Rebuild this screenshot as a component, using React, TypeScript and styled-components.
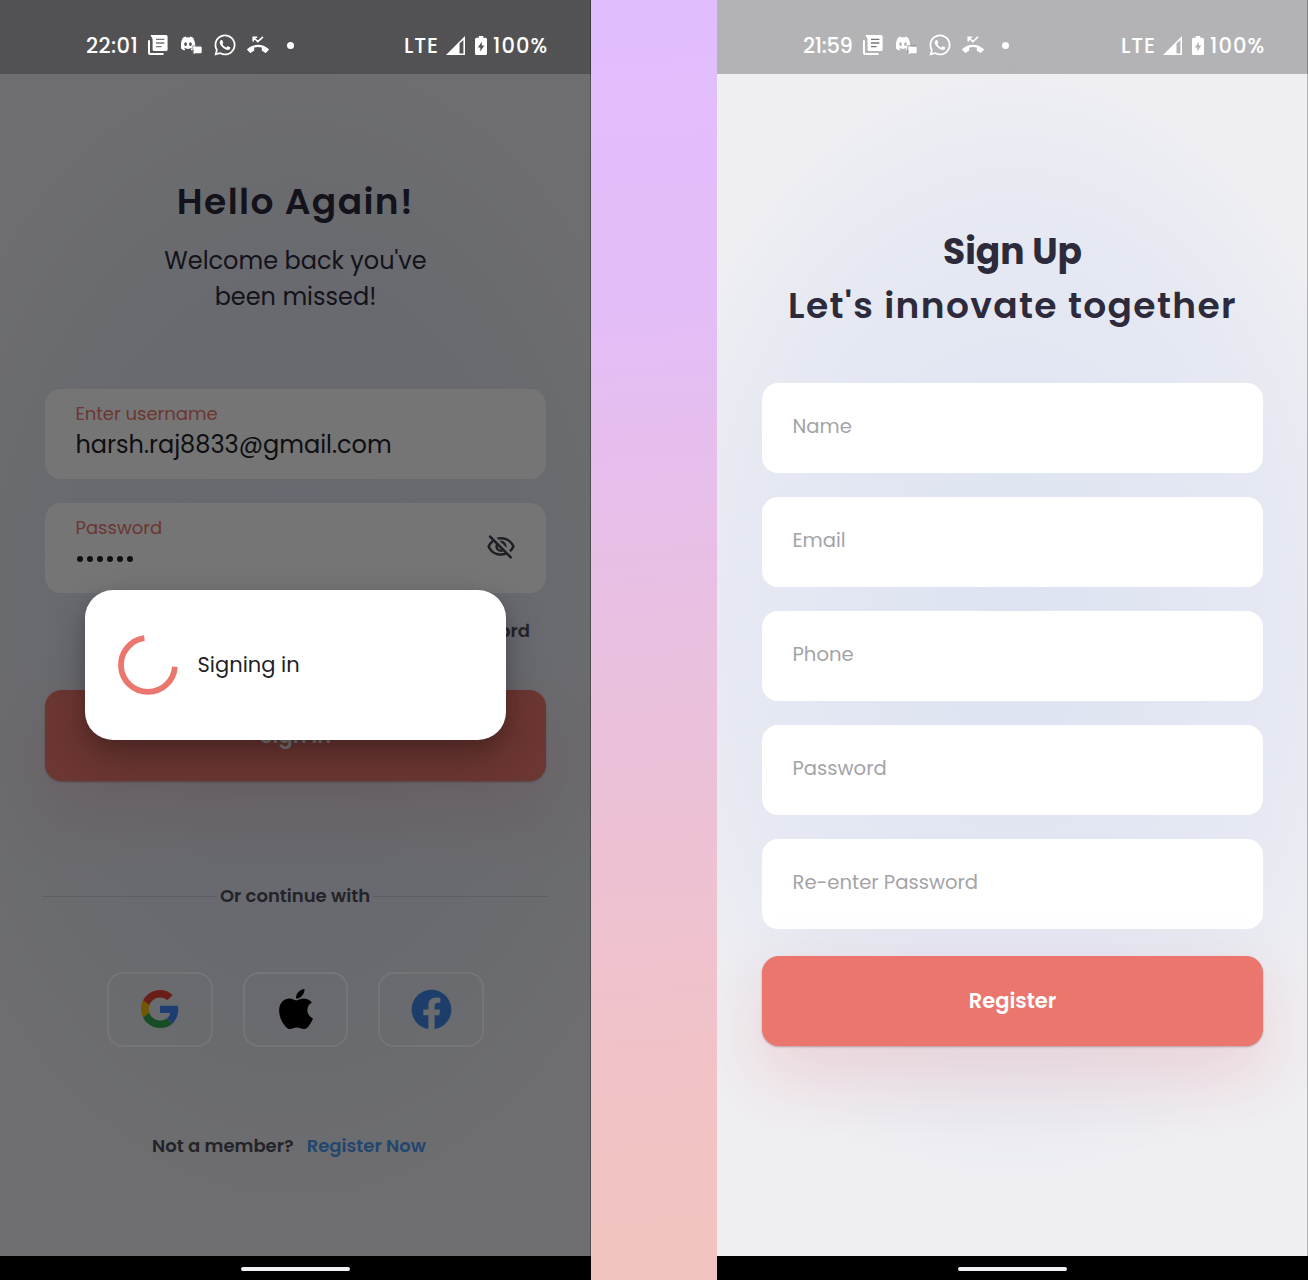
import React from "react";
import styled, { createGlobalStyle } from "styled-components";
import { FaApple, FaDiscord, FaFacebook, FaWhatsapp } from "react-icons/fa";
import { MdOutlineVisibilityOff } from "react-icons/md";

const ink = "#2d2b3b";
const softInk = "#504e5a";
const coral = "#eb766d";

const GlobalStyle = createGlobalStyle`
  *, *::before, *::after { box-sizing: border-box; }
  body {
    margin: 0;
    font-family: Poppins, Inter, "Open Sans", sans-serif;
    color: ${ink};
  }
`;

const Board = styled.main`
  display: flex;
  justify-content: space-between;
  width: 1308px;
  height: 1280px;
  overflow: hidden;
  background: linear-gradient(176deg, #e2bdff 0%, #e3bdf8 25%, #e9c0de 52%, #f2c3c4 85%, #f4c4c0 100%);
`;

const Phone = styled.section`
  position: relative;
  display: flex;
  flex-direction: column;
  width: 591px;
  height: 1280px;
  overflow: hidden;
  background:
    linear-gradient(to left, rgba(0, 0, 0, 0.25) 1px, transparent 1px),
    radial-gradient(ellipse 390px 570px at 50% 49%, #dce3f2 0%, #e2e6f2 40%, #e6e9f2 72%, rgba(236, 238, 243, 0) 100%),
    #efeff3;
`;

const StatusBar = styled.header`
  position: relative;
  z-index: 2;
  display: flex;
  align-items: center;
  justify-content: space-between;
  flex: none;
  height: 74px;
  padding: 16px 43px 0 86px;
  background: rgba(0, 0, 0, 0.25);
  color: #fff;
`;

const StatusGroup = styled.div`
  display: flex;
  align-items: center;
`;

const StatusText = styled.span<{ $width: number; $spacing: number }>`
  width: ${(p) => p.$width}px;
  padding-top: 1px;
  font-size: 21px;
  font-weight: 500;
  line-height: 26px;
  letter-spacing: ${(p) => p.$spacing}px;
  white-space: nowrap;
`;

const Glyph = styled.span<{ $left: number; $width: number }>`
  display: flex;
  justify-content: center;
  width: ${(p) => p.$width}px;
  margin-left: ${(p) => p.$left}px;
`;

const NotificationDot = styled.i`
  width: 7px;
  height: 7px;
  margin-left: 18px;
  border-radius: 50%;
  background: #fff;
`;

const NavBar = styled.footer`
  position: relative;
  z-index: 2;
  display: flex;
  align-items: center;
  justify-content: center;
  flex: none;
  height: 24px;
  padding-top: 2px;
  background: #000;
`;

const HomePill = styled.i`
  width: 109px;
  height: 4px;
  border-radius: 2px;
  background: #f1f0f5;
`;

const Screen = styled.div<{ $top: number }>`
  display: flex;
  flex: 1;
  flex-direction: column;
  padding: ${(p) => p.$top}px 45px 0;
`;

const Title = styled.h1<{ $weight?: number; $spacing?: number }>`
  margin: 0;
  font-size: 36px;
  font-weight: ${(p) => p.$weight ?? 600};
  line-height: 54px;
  letter-spacing: ${(p) => p.$spacing ?? 0}px;
  text-align: center;
  white-space: nowrap;
`;

const Subtitle = styled.p`
  margin: 14px 0 0;
  font-size: 24px;
  line-height: 36px;
  text-align: center;
`;

const Form = styled.form<{ $top: number }>`
  display: flex;
  flex-direction: column;
  gap: 24.5px;
  margin-top: ${(p) => p.$top}px;
`;

const Field = styled.label`
  display: flex;
  align-items: center;
  justify-content: space-between;
  height: 89.5px;
  padding: 0 30px 0 30.5px;
  border-radius: 16px;
  background: #fff;
`;

const FieldText = styled.span`
  display: flex;
  flex-direction: column;
  padding-bottom: 6px;
`;

const FieldLabel = styled.span`
  font-size: 18px;
  line-height: 28px;
  color: ${coral};
`;

const FieldValue = styled.span`
  height: 34px;
  font-size: 24px;
  line-height: 34px;
  color: #222129;
`;

const MaskedValue = styled.span`
  display: flex;
  align-items: center;
  gap: 4px;
  height: 34px;
  padding-left: 1.5px;
`;

const MaskDot = styled.i`
  width: 6px;
  height: 6px;
  border-radius: 50%;
  background: #222129;
`;

const HidePasswordIcon = styled(MdOutlineVisibilityOff)`
  margin-bottom: 2px;
  color: #444251;
`;

const Placeholder = styled.span`
  margin-top: -3px;
  font-size: 19.6px;
  line-height: 30px;
  color: #a3a3a7;
`;

const Recovery = styled.a`
  align-self: flex-end;
  margin: 24px 16px 0 0;
  font-size: 18px;
  font-weight: 600;
  line-height: 28px;
  color: ${softInk};
`;

const PrimaryButton = styled.button<{ $top: number }>`
  flex: none;
  height: 90.5px;
  margin-top: ${(p) => p.$top}px;
  padding: 0;
  border: 0;
  border-radius: 17px;
  background: ${coral};
  box-shadow: 0 1px 2px rgba(90, 30, 40, 0.35), 0 30px 66px 8px rgba(235, 118, 119, 0.19);
  color: #fff;
  font-family: inherit;
  font-size: 21px;
  font-weight: 600;
`;

const Divider = styled.div`
  display: flex;
  align-items: center;
  gap: 3px;
  margin: 101.5px -2px 0 -3px;
  font-size: 18px;
  font-weight: 600;
  line-height: 28px;
  color: ${softInk};
  white-space: nowrap;

  &::before,
  &::after {
    content: "";
    flex: 1;
    height: 1px;
    background: #cfcfd7;
  }
`;

const Providers = styled.div`
  display: flex;
  justify-content: center;
  gap: 30px;
  margin: 61.5px 0 0;
`;

const ProviderButton = styled.button<{ $color?: string }>`
  display: flex;
  align-items: center;
  justify-content: center;
  width: 105.5px;
  height: 75px;
  padding: 0;
  border: 2px solid #fff;
  border-radius: 16px;
  background: transparent;
  color: ${(p) => p.$color ?? "#000"};
`;

const SignUpLine = styled.p`
  display: flex;
  justify-content: center;
  gap: 13px;
  margin: 85px 13px 0 0;
  font-size: 18px;
  font-weight: 600;
  line-height: 28px;
  color: ${softInk};
  white-space: nowrap;
`;

const RegisterLink = styled.a`
  color: #4d98ef;
`;

const Scrim = styled.div`
  position: absolute;
  inset: 0;
  z-index: 1;
  display: flex;
  align-items: flex-start;
  justify-content: center;
  padding-top: 590px;
  background: rgba(0, 0, 0, 0.54);
`;

const Dialog = styled.div`
  display: flex;
  align-items: center;
  gap: 18.5px;
  width: 421px;
  height: 150px;
  padding-left: 32px;
  border-radius: 28px;
  background: #fff;
  box-shadow: 0 16px 36px rgba(0, 0, 0, 0.26), 0 6px 14px rgba(0, 0, 0, 0.1);
  color: #1f1f25;
`;

const DialogText = styled.span`
  font-size: 21px;
  line-height: 30px;
`;

const ArticleIcon = () => (
  <svg width="20" height="20" viewBox="0 0 20 20" fill="none">
    <path d="M2.5 0H18a1.6 1.6 0 0 1 1.6 1.6v12.8A1.6 1.6 0 0 1 18 16H6.2a1.6 1.6 0 0 1-1.6-1.6V4.2z" fill="#fff" />
    <path d="M1 5.2V17.4A1.6 1.6 0 0 0 2.6 19H15.5" stroke="#fff" strokeWidth="2" />
    <path d="M8 4.4h8.4M8 8h8.4M8 11.6h5.6" stroke="#77777a" strokeWidth="1.4" />
  </svg>
);

const SignalIcon = () => (
  <svg width="19" height="19" viewBox="0 0 19 19">
    <path fillRule="evenodd" d="M0 19 19 0V19zM13.500 7.600V17.400h3.900V4z" fill="#fff" />
  </svg>
);

const BatteryIcon = () => (
  <svg width="12" height="19" viewBox="0 0 12 19">
    <path fillRule="evenodd" d="M3.8 0h4.4v1.8h2.2A1.6 1.6 0 0 1 12 3.4v14A1.6 1.6 0 0 1 10.4 19H1.6A1.6 1.6 0 0 1 0 17.4v-14A1.6 1.6 0 0 1 1.6 1.8h2.2zM6.8 5.8 2.8 11.4h2.5v4l4-5.8H6.8z" fill="#fff" />
  </svg>
);

const ChatIcon = () => (
  <svg width="21" height="18" viewBox="0 0 21 18">
    <FaDiscord x="-1" y="-0.5" width="21" height="17.5" preserveAspectRatio="none" />
    <path d="M12.5 10.5h7a1.2 1.2 0 0 1 1.2 1.2v4.3a1.2 1.2 0 0 1-1.2 1.2h-5l-2 .8z" fill="#fff" />
    <path d="M11.8 17V9.800H20" fill="none" stroke="#77777a" strokeWidth=".7" />
  </svg>
);

const MissedCallIcon = () => (
  <svg width="22" height="20" viewBox="0 0 22 20">
    <path d="M6.2 6.4V2.2H10.2M6.5 2.5l4.3 4.1 5.2-4.800" fill="none" stroke="#fff" strokeWidth="1.6" />
    <path d="M.3 14.1C6.4 8.3 15.6 8.3 21.7 14.1c.3.3.3.7 0 1L19 17.8c-.3.3-.7.3-1 0-.8-.7-1.7-1.3-2.6-1.7-.4-.2-.6-.5-.6-.9v-2.7c-2.5-.7-5.1-.7-7.6 0v2.7c0 .4-.2.7-.6.9-.9.4-1.8 1-2.6 1.7-.3.3-.7.3-1 0L.3 15.1c-.3-.3-.3-.7 0-1z" fill="#fff" />
  </svg>
);

const GoogleIcon = () => (
  <svg width="38" height="38" viewBox="0 0 48 48">
    <path fill="#EA4335" d="M24 9.5c3.54 0 6.71 1.22 9.21 3.6l6.85-6.85C35.9 2.38 30.47 0 24 0 14.62 0 6.51 5.38 2.56 13.22l7.98 6.19C12.43 13.72 17.74 9.5 24 9.5z" />
    <path fill="#4285F4" d="M46.98 24.55c0-1.57-.15-3.09-.38-4.55H24v9.02h12.94c-.58 2.96-2.26 5.48-4.78 7.18l7.73 6c4.51-4.18 7.09-10.36 7.09-17.65z" />
    <path fill="#FBBC05" d="M10.53 28.59a14.5 14.5 0 0 1 0-9.18l-7.98-6.19a24 24 0 0 0 0 21.56z" />
    <path fill="#34A853" d="M24 48c6.48 0 11.93-2.13 15.89-5.81l-7.73-6c-2.15 1.45-4.92 2.3-8.16 2.3-6.26 0-11.57-4.22-13.47-9.91l-7.98 6.19C6.51 42.62 14.62 48 24 48z" />
  </svg>
);

const Spinner = () => (
  <svg width="62" height="62" viewBox="0 0 62 62" fill="none">
    <path d="M27.4 4.2A27 27 0 1 0 57.9 32.8" stroke={coral} strokeWidth="5.8" />
  </svg>
);

type StatusProps = { time: string; timeWidth: number; timeSpacing: number };

const PhoneStatus = ({ time, timeWidth, timeSpacing }: StatusProps) => (
  <StatusBar>
    <StatusGroup>
      <StatusText $width={timeWidth} $spacing={timeSpacing}>{time}</StatusText>
      <Glyph $left={11} $width={20}><ArticleIcon /></Glyph>
      <Glyph $left={13} $width={21}><ChatIcon /></Glyph>
      <Glyph $left={11} $width={24}><FaWhatsapp size={24} /></Glyph>
      <Glyph $left={10} $width={22}><MissedCallIcon /></Glyph>
      <NotificationDot />
    </StatusGroup>
    <StatusGroup>
      <StatusText $width={35} $spacing={0.9}>LTE</StatusText>
      <Glyph $left={7} $width={19}><SignalIcon /></Glyph>
      <Glyph $left={10} $width={12}><BatteryIcon /></Glyph>
      <Glyph $left={6} $width={55}><StatusText $width={55} $spacing={1.1}>100%</StatusText></Glyph>
    </StatusGroup>
  </StatusBar>
);

const PhoneNav = () => (
  <NavBar>
    <HomePill />
  </NavBar>
);

const LoginPhone = () => (
  <Phone>
    <PhoneStatus time="22:01" timeWidth={51} timeSpacing={0.4} />
    <Screen $top={101}>
      <Title $spacing={1.38}>Hello Again!</Title>
      <Subtitle>
        Welcome back you've
        <br />
        been missed!
      </Subtitle>
      <Form $top={74}>
        <Field>
          <FieldText>
            <FieldLabel>Enter username</FieldLabel>
            <FieldValue>harsh.raj8833@gmail.com</FieldValue>
          </FieldText>
        </Field>
        <Field>
          <FieldText>
            <FieldLabel>Password</FieldLabel>
            <MaskedValue>
              {[0, 1, 2, 3, 4, 5].map((n) => (
                <MaskDot key={n} />
              ))}
            </MaskedValue>
          </FieldText>
          <HidePasswordIcon size={30} />
        </Field>
      </Form>
      <Recovery>Recovery Password</Recovery>
      <PrimaryButton $top={45.5}>Sign in</PrimaryButton>
      <Divider>Or continue with</Divider>
      <Providers>
        <ProviderButton><GoogleIcon /></ProviderButton>
        <ProviderButton><FaApple size={46} /></ProviderButton>
        <ProviderButton $color="#4087e8"><FaFacebook size={41} /></ProviderButton>
      </Providers>
      <SignUpLine>
        <span>Not a member?</span>
        <RegisterLink>Register Now</RegisterLink>
      </SignUpLine>
    </Screen>
    <Scrim>
      <Dialog>
        <Spinner />
        <DialogText>Signing in</DialogText>
      </Dialog>
    </Scrim>
    <PhoneNav />
  </Phone>
);

const signUpFields = ["Name", "Email", "Phone", "Password", "Re-enter Password"];

const SignUpPhone = () => (
  <Phone>
    <PhoneStatus time="21:59" timeWidth={49} timeSpacing={-0.4} />
    <Screen $top={151}>
      <Title $weight={700}>Sign Up</Title>
      <Title $spacing={1.38}>Let's innovate together</Title>
      <Form $top={50}>
        {signUpFields.map((name) => (
          <Field key={name}>
            <Placeholder>{name}</Placeholder>
          </Field>
        ))}
      </Form>
      <PrimaryButton $top={27}>Register</PrimaryButton>
    </Screen>
    <PhoneNav />
  </Phone>
);

export default function App() {
  return (
    <>
      <GlobalStyle />
      <Board>
        <LoginPhone />
        <SignUpPhone />
      </Board>
    </>
  );
}
